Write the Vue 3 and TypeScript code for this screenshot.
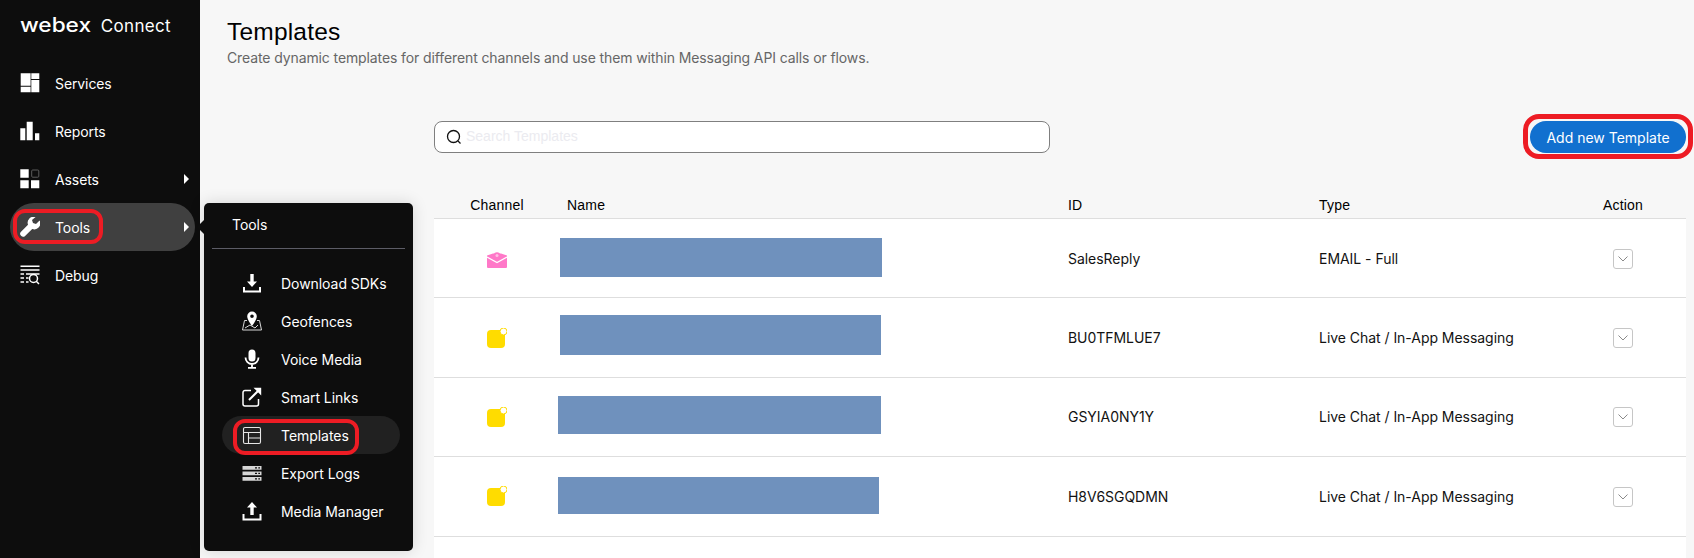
<script setup lang="ts">
interface Shape {
  d: string
  stroke?: string
  width?: number
  fill?: string
}

interface NavItem {
  label: string
  icon: Shape[]
  arrow?: boolean
  active?: boolean
}

interface TemplateRow {
  id: string
  type: string
  channel: 'email' | 'chat'
  barOffset: number
  barWidth: number
  barHeight: number
  barShift: number
}

const navItems: NavItem[] = [
  {
    label: 'Services',
    icon: [{ d: 'M.7.3h9.9v12.4H.7zM.7 13.7h9.9v5.6H.7zM11.3.3h8v5.6h-8zM11.3 7h8v12.3h-8z' }],
  },
  {
    label: 'Reports',
    icon: [{ d: 'M.3 7.3h5v12h-5zM6.7.7h6v18.6h-6zM15 12.3h4.3v7H15z' }],
  },
  {
    label: 'Assets',
    arrow: true,
    icon: [
      { d: 'M.3.3h8.4v8.4H.3zM.3 11.3h8.4v8H.3zM11 11.3h8.3v8H11z' },
      { d: 'M12.7 1h5.1a1 1 0 0 1 1 1v5.2a1 1 0 0 1-1 1h-5.1a1 1 0 0 1-1-1V2a1 1 0 0 1 1-1z', stroke: '#5c5c5c', width: 1, fill: 'none' },
    ],
  },
  {
    label: 'Tools',
    arrow: true,
    active: true,
    icon: [{ d: 'M19.6 3.5L16 7.1l-3-1-1-3L15.6.1A6 6 0 0 0 8 7.8L1 14.8a2.9 2.9 0 0 0 4.1 4.1L12.2 12a6 6 0 0 0 7.4-8.5z' }],
  },
  {
    label: 'Debug',
    icon: [
      { d: 'M.5 1.2h19M.5 5h19M.5 9h3.5M6 9h13.5M.5 13h3.5M6 13h2.5M.5 17h3.5M6 17h2.5', stroke: '#fff', width: 1.4, fill: 'none' },
      { d: 'M9.5 13.5a4 4 0 1 0 8 0a4 4 0 1 0-8 0M16.5 16.5l2.5 2.5', stroke: '#fff', width: 1.5, fill: 'none' },
    ],
  },
]

const toolItems: NavItem[] = [
  {
    label: 'Download SDKs',
    icon: [
      { d: 'M8.3 1h3.4v7.5H15L10 14 5 8.5h3.3z' },
      { d: 'M2 14v4.5h16V14', stroke: '#fff', width: 2, fill: 'none' },
    ],
  },
  {
    label: 'Geofences',
    icon: [
      { d: 'M5 9.5H2.5L.5 19h19l-2-9.5H15M3 17l5-3 5 3 3-3', stroke: '#d8d8d8', width: 1, fill: 'none' },
      { d: 'M10 .5a4.8 4.8 0 0 0-4.8 4.8C5.2 9 10 15 10 15s4.8-6 4.8-9.7A4.8 4.8 0 0 0 10 .5zm0 3a1.8 1.8 0 1 1 0 3.6a1.8 1.8 0 0 1 0-3.6z' },
    ],
  },
  {
    label: 'Voice Media',
    icon: [
      { d: 'M10 .5a3.5 3.5 0 0 0-3.5 3.5v5a3.5 3.5 0 0 0 7 0V4A3.5 3.5 0 0 0 10 .5z' },
      { d: 'M3.5 8.5a6.5 6.5 0 0 0 13 0M10 15v3.5M6 18.8h8', stroke: '#fff', width: 1.8, fill: 'none' },
    ],
  },
  {
    label: 'Smart Links',
    icon: [
      { d: 'M9 3.5H3a2 2 0 0 0-2 2V17a2 2 0 0 0 2 2h11.5a2 2 0 0 0 2-2v-5', stroke: '#fff', width: 1.5, fill: 'none' },
      { d: 'M7 13l10-10', stroke: '#fff', width: 2, fill: 'none' },
      { d: 'M11.5 .8h7.7v7.7l-2.4-2.4-3-3z' },
    ],
  },
  {
    label: 'Templates',
    active: true,
    icon: [
      { d: 'M3 2.5h14A1.5 1.5 0 0 1 18.5 4v13a1.5 1.5 0 0 1-1.5 1.5H3A1.5 1.5 0 0 1 1.5 17V4A1.5 1.5 0 0 1 3 2.5zM1.5 7.5h17M6.5 7.5v11M6.5 13h12', stroke: '#e6e6e6', width: 1.1, fill: 'none' },
    ],
  },
  {
    label: 'Export Logs',
    icon: [
      { d: 'M.5 3h19v3.8H.5zM.5 8.5h19v3.8H.5zM.5 14h19v3.8H.5z', fill: '#d6d6d6' },
      { d: 'M13 4.2h2v1.4h-2zM13 9.7h2v1.4h-2zM13 15.2h2v1.4h-2z', fill: '#0d0d0d' },
      { d: 'M16.3 4.2H18v1.4h-1.700zM16.3 9.7H18v1.4h-1.700zM16.3 15.2H18v1.4h-1.700z', fill: '#0d0d0d' },
    ],
  },
  {
    label: 'Media Manager',
    icon: [
      { d: 'M8.3 14h3.4V6.5H15L10 1 5 6.5h3.3z' },
      { d: 'M1.5 13v5.5h17V13', stroke: '#fff', width: 2, fill: 'none' },
    ],
  },
]

const rows: TemplateRow[] = [
  { id: 'SalesReply', type: 'EMAIL - Full', channel: 'email', barOffset: 0, barWidth: 322, barHeight: 39, barShift: -1.5 },
  { id: 'BU0TFMLUE7', type: 'Live Chat / In-App Messaging', channel: 'chat', barOffset: 0, barWidth: 321, barHeight: 40, barShift: -5.5 },
  { id: 'GSYIA0NY1Y', type: 'Live Chat / In-App Messaging', channel: 'chat', barOffset: -2, barWidth: 323, barHeight: 38, barShift: -4.5 },
  { id: 'H8V6SGQDMN', type: 'Live Chat / In-App Messaging', channel: 'chat', barOffset: -2, barWidth: 321, barHeight: 37, barShift: -2.5 },
]

function barStyle(row: TemplateRow) {
  return {
    marginLeft: `${row.barOffset}px`,
    width: `${row.barWidth}px`,
    height: `${row.barHeight}px`,
    marginTop: `${row.barShift}px`,
  }
}
</script>

<template>
  <div class="page">
    <aside class="sidebar">
      <div class="logo">
        <span class="logo-brand">webex</span>
        <span class="logo-product">Connect</span>
      </div>
      <nav class="nav">
        <div v-for="item in navItems" :key="item.label" :class="['nav-item', { active: item.active }]">
          <svg class="icon" viewBox="0 0 20 20" width="20" height="20">
            <path
              v-for="(shape, i) in item.icon"
              :key="i"
              :d="shape.d"
              :fill="shape.fill ?? '#fff'"
              :stroke="shape.stroke"
              :stroke-width="shape.width"
            />
          </svg>
          <span class="nav-label">{{ item.label }}</span>
          <span v-if="item.arrow" class="nav-arrow"></span>
        </div>
      </nav>
    </aside>

    <main class="main">
      <header class="heading">
        <h1>Templates</h1>
        <p>Create dynamic templates for different channels and use them within Messaging API calls or flows.</p>
      </header>

      <section class="content">
        <div class="toolbar">
          <div class="search">
            <svg viewBox="0 0 16 16" width="16" height="16">
              <circle cx="7.5" cy="7.5" r="6" fill="none" stroke="#111" stroke-width="1.3" />
              <path d="M12 12l2.5 2.5" stroke="#111" stroke-width="1.3" />
            </svg>
            <input type="text" placeholder="Search Templates" />
          </div>
          <button class="add-btn" type="button">Add new Template</button>
        </div>

        <div class="table">
          <div class="table-row table-head">
            <div class="col-channel">Channel</div>
            <div class="col-name">Name</div>
            <div>ID</div>
            <div>Type</div>
            <div class="col-action">Action</div>
          </div>
          <div v-for="row in rows" :key="row.id" class="table-row">
            <div class="col-channel">
              <svg v-if="row.channel === 'email'" class="email-icon" viewBox="0 0 20 16" width="20" height="16">
                <path d="M0 3.5L6 1.5h8l6 2V15a1 1 0 0 1-1 1H1a1 1 0 0 1-1-1z" fill="#ff78c8" />
                <circle cx="10" cy="3.5" r="3.2" fill="#ff78c8" />
                <circle cx="10" cy="3.5" r="1.5" fill="#ffc0e4" />
                <path d="M0 5l10 5.5L20 5" fill="none" stroke="#fff" stroke-width="1.2" />
              </svg>
              <svg v-else viewBox="0 0 20 20" width="20" height="20">
                <rect x="0" y="2" width="18" height="18" rx="4" fill="#ffdc00" />
                <circle cx="16.5" cy="3.5" r="3.5" fill="#fff" stroke="#ffdc00" stroke-width="1" />
              </svg>
            </div>
            <div class="col-bar"><div class="bar" :style="barStyle(row)"></div></div>
            <div>{{ row.id }}</div>
            <div>{{ row.type }}</div>
            <div class="col-action">
              <span class="row-toggle">
                <svg viewBox="0 0 10 6" width="10" height="6">
                  <path d="M.5.5L5 5 9.5.5" fill="none" stroke="#8a8a8a" stroke-width="1" />
                </svg>
              </span>
            </div>
          </div>
          <div class="table-row"></div>
        </div>
      </section>
    </main>

    <!-- flyout menu of the active sidebar entry -->
    <div class="flyout">
      <span class="flyout-tip"></span>
      <div class="flyout-title">Tools</div>
      <div class="flyout-list">
        <div v-for="item in toolItems" :key="item.label" :class="['flyout-item', { active: item.active }]">
          <svg class="icon" viewBox="0 0 20 20" width="20" height="20">
            <path
              v-for="(shape, i) in item.icon"
              :key="i"
              :d="shape.d"
              :fill="shape.fill ?? '#fff'"
              :stroke="shape.stroke"
              :stroke-width="shape.width"
            />
          </svg>
          <span>{{ item.label }}</span>
        </div>
      </div>
    </div>

    <!-- red annotations drawn over the screenshot -->
    <span class="mark mark-tools"></span>
    <span class="mark mark-templates"></span>
    <span class="mark mark-add"></span>
  </div>
</template>

<style scoped>
.page {
  position: relative;
  display: flex;
  width: 1694px;
  height: 558px;
  overflow: hidden;
  background: #f7f7f7;
  font-family: Inter, "Liberation Sans", sans-serif;
  font-size: 14px;
  color: #121212;
}

.sidebar {
  flex: 0 0 200px;
  background: #0d0d0d;
  color: #fff;
}

.logo {
  display: flex;
  align-items: baseline;
  gap: 9px;
  padding: 10px 0 0 20px;
  height: 59px;
  box-sizing: border-box;
}

.logo-brand {
  font-size: 20px;
  font-weight: 500;
  line-height: 30px;
  transform: scaleX(1.13);
  transform-origin: left;
  margin-right: 9px;
}

.logo-product {
  font-size: 17px;
  font-weight: 400;
  letter-spacing: 0.3px;
}

.nav {
  display: flex;
  flex-direction: column;
  margin-left: 10px;
  width: 185px;
  letter-spacing: -0.1px;
}

.nav-item {
  display: flex;
  align-items: center;
  height: 48px;
  padding-left: 10px;
  border-radius: 24px;
}

.nav-item.active {
  background: #404040;
}

.nav-label {
  margin-left: 15px;
}

.nav-arrow {
  margin-left: auto;
  margin-right: 6px;
  border-left: 5px solid #fff;
  border-top: 5px solid transparent;
  border-bottom: 5px solid transparent;
}

.icon {
  flex: none;
}

.main {
  flex: 1;
  min-width: 0;
  padding: 0 8px 0 27px;
}

.heading {
  height: 121px;
}

.heading h1 {
  margin: 0;
  padding-top: 17px;
  font-family: "Liberation Sans", Arial, sans-serif;
  font-size: 24.5px;
  font-weight: 400;
  letter-spacing: 0.2px;
  line-height: 30px;
  color: #000;
}

.heading p {
  margin: 2px 0 0;
  font-size: 14px;
  letter-spacing: -0.11px;
  line-height: 18px;
  color: #666;
}

.content {
  padding-left: 207px;
}

.toolbar {
  display: flex;
  justify-content: space-between;
  align-items: flex-start;
}

.search {
  display: flex;
  align-items: center;
  gap: 4px;
  width: 616px;
  height: 32px;
  box-sizing: border-box;
  padding-left: 11px;
  background: #fff;
  border: 1px solid #7f7f7f;
  border-radius: 8px;
}

.search input {
  flex: 1;
  padding: 0 0 2px;
  border: 0;
  outline: 0;
  background: transparent;
  font-family: "Liberation Sans", Arial, sans-serif;
  font-size: 14px;
}

.search input::placeholder {
  color: #ebebf0;
  opacity: 1;
}

.add-btn {
  width: 156px;
  height: 32px;
  border: 0;
  border-radius: 16px;
  background: #1170cf;
  color: #fff;
  font: inherit;
}

.table {
  margin-top: 30px;
  background: #fff;
}

.table-row {
  display: grid;
  grid-template-columns: 126px 508px 251px 241px 126px;
  align-items: center;
  height: 79.4px;
  box-sizing: border-box;
  border-bottom: 1px solid #dedede;
  font-size: 14px;
  letter-spacing: -0.04px;
}

.table-head {
  height: 36px;
  background: #f7f7f7;
  align-items: start;
  padding-top: 14px;
  font-family: "Liberation Sans", Arial, sans-serif;
  letter-spacing: 0.2px;
  color: #000;
}

.col-channel,
.col-action {
  display: flex;
  justify-content: center;
}

.col-name {
  padding-left: 7px;
}

.email-icon {
  margin-top: 3px;
}

.bar {
  background: #6f91bd;
}

.row-toggle {
  display: flex;
  align-items: center;
  justify-content: center;
  width: 20px;
  height: 20px;
  margin-top: 1px;
  box-sizing: border-box;
  background: #fff;
  border: 1px solid #c6c6c6;
  border-radius: 3px;
}

.flyout {
  position: absolute;
  left: 204px;
  top: 203px;
  width: 209px;
  height: 348px;
  box-sizing: border-box;
  background: #0d0d0d;
  border-radius: 5px;
  box-shadow: 0 0 16px rgba(0, 0, 0, 0.14);
  color: #fff;
  letter-spacing: -0.05px;
}

.flyout-tip {
  position: absolute;
  left: -7px;
  top: 17px;
  border-right: 7px solid #0d0d0d;
  border-top: 7px solid transparent;
  border-bottom: 7px solid transparent;
}

.flyout-title {
  margin: 0 8px;
  padding-left: 20px;
  height: 45px;
  line-height: 44px;
  border-bottom: 1px solid #5c5c66;
}

.flyout-list {
  display: flex;
  flex-direction: column;
  margin: 15px 13px 0 18px;
}

.flyout-item {
  display: flex;
  align-items: center;
  gap: 19px;
  height: 38px;
  padding-left: 20px;
  border-radius: 19px;
}

.flyout-item.active {
  background: #212121;
}

.mark {
  position: absolute;
  box-sizing: border-box;
  border: 4px solid #ed1c24;
  border-radius: 12px;
  pointer-events: none;
}

.mark-tools {
  left: 13px;
  top: 209px;
  width: 90px;
  height: 35px;
}

.mark-templates {
  left: 233px;
  top: 419px;
  width: 126px;
  height: 36px;
}

.mark-add {
  left: 1523px;
  top: 114px;
  width: 170px;
  height: 45px;
  border-width: 5px;
  border-radius: 16px;
}
</style>

<style>
body {
  margin: 0;
}
</style>
